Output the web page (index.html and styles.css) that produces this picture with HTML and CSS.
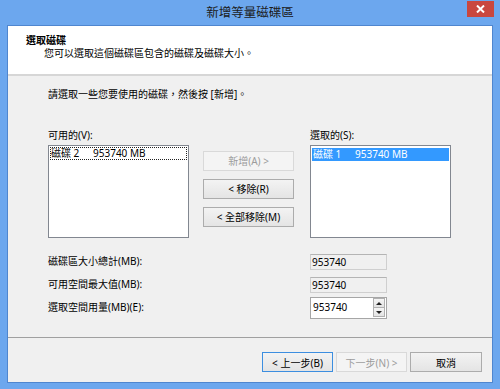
FILE: index.html
```
<!DOCTYPE html>
<html lang="zh-Hant">
<head>
  <meta charset="UTF-8" />
  <title>新增等量磁碟區</title>
  <link rel="stylesheet" href="styles.css">
</head>
<body>
  <div class="window">
    <!-- Title bar -->
    <div class="titlebar">
      <span class="title">新增等量磁碟區</span>
      <button class="close" aria-label="關閉">
        <svg width="9" height="8" viewBox="0 0 9 8"><path d="M1 0.5 L8 7.5 M8 0.5 L1 7.5" stroke="#fff" stroke-width="2"/></svg>
      </button>
    </div>

    <div class="client">
      <!-- Wizard header -->
      <div class="header">
        <div class="h-title">選取磁碟</div>
        <div class="h-sub">您可以選取這個磁碟區包含的磁碟及磁碟大小。</div>
      </div>

      <div class="content">
        <p class="intro">請選取一些您要使用的磁碟，然後按 [新增]。</p>

        <div class="pickers">
          <div class="pick-col">
            <div class="lbl">可用的(V):</div>
            <div class="listbox">
              <div class="item focus"><span class="disk">磁碟 2</span>953740 MB</div>
            </div>
          </div>
          <div class="btn-col">
            <button class="btn" disabled>新增(A) &gt;</button>
            <button class="btn">&lt; 移除(R)</button>
            <button class="btn">&lt; 全部移除(M)</button>
          </div>
          <div class="pick-col">
            <div class="lbl">選取的(S):</div>
            <div class="listbox">
              <div class="item selected"><span class="disk">磁碟 1</span>953740 MB</div>
            </div>
          </div>
        </div>

        <div class="fields">
          <div class="f-lbl">磁碟區大小總計(MB):</div>
          <div class="readonly">953740</div>
          <div class="f-lbl">可用空間最大值(MB):</div>
          <div class="readonly">953740</div>
          <div class="f-lbl">選取空間用量(MB)(E):</div>
          <div class="spin">
            <span class="spin-val">953740</span>
            <span class="spin-btns">
              <span class="spin-btn"><i class="arr up"></i></span>
              <span class="spin-btn"><i class="arr down"></i></span>
            </span>
          </div>
        </div>
      </div>

      <!-- Wizard buttons -->
      <div class="footer">
        <button class="btn nav focused">&lt; 上一步(B)</button>
        <button class="btn nav" disabled>下一步(N) &gt;</button>
        <button class="btn nav cancel">取消</button>
      </div>
    </div>
  </div>
</body>
</html>
```

FILE: styles.css
```
/* RESET & BASE */
* {
  margin: 0;
  padding: 0;
  box-sizing: border-box;
}
body {
  font-family: "Noto Sans", "Noto Sans CJK TC", sans-serif;
  font-size: 10px;
  color: #000;
  background: #fff;
}
/* WINDOW FRAME */
.window {
  width: 500px;
  height: 389px;
  background: #6ca7ee;
  padding: 0 7px 6px;
  display: flex;
  flex-direction: column;
}
.titlebar {
  position: relative;
  height: 25px;
  line-height: 25px;
  text-align: center;
}
.title {
  font-size: 12.5px;
  color: #1b1b1b;
}
.close {
  position: absolute;
  top: 1px;
  right: -1px;
  width: 27px;
  height: 16px;
  border: none;
  background: #c9473f;
  display: flex;
  align-items: center;
  justify-content: center;
}
.client {
  flex: 1;
  display: flex;
  flex-direction: column;
  background: #f0f0f0;
  border: 1px solid #4f86cf;
}
/* HEADER */
.header {
  height: 50px;
  background: #fff;
  border-bottom: 2px solid #d6d6d6;
  padding: 8px 0 0 18px;
  line-height: 13px;
}
.h-title {
  font-weight: bold;
}
.h-sub {
  padding-left: 18px;
}
/* CONTENT */
.content {
  flex: 1;
  padding: 12px 0 0 40px;
  line-height: 13px;
}
.intro {
  height: 13px;
}
.pickers {
  display: flex;
  margin-top: 28px;
}
.pick-col {
  width: 141px;
}
.lbl {
  height: 13px;
  margin-bottom: 3px;
}
.listbox {
  height: 93px;
  background: #fff;
  border: 1px solid #828790;
  padding: 1px;
}
.item {
  height: 13px;
  padding-left: 1px;
  white-space: nowrap;
}
.item.focus {
  outline: 1px dotted #222;
  outline-offset: -1px;
}
.item.selected {
  background: #3399ff;
  color: #fff;
  margin-top: 1px;
}
.disk {
  display: inline-block;
  width: 42px;
}
.btn-col {
  width: 91px;
  margin: 0 16px 0 14px;
  padding-top: 22px;
  display: flex;
  flex-direction: column;
  gap: 8px;
}
/* BUTTONS */
.btn {
  height: 20px;
  font: inherit;
  font-size: 10px;
  color: #000;
  background: linear-gradient(#f3f3f3, #e4e4e4);
  border: 1px solid #acacac;
}
.btn:disabled {
  color: #9c9c9c;
  background: #f4f4f4;
  border-color: #d9d9d9;
}
/* SIZE FIELDS */
.fields {
  display: grid;
  grid-template-columns: 262px 77px;
  grid-auto-rows: 23px;
  align-items: center;
  margin-top: 12px;
}
.readonly {
  height: 16px;
  line-height: 14px;
  padding-left: 1px;
  background: #f0f0f0;
  border: 1px solid #cfcfcf;
  border-top-color: #b4b4b4;
}
.spin {
  height: 22px;
  display: flex;
  align-items: center;
  justify-content: space-between;
  background: #fff;
  border: 1px solid #a6a6a6;
  padding: 0 1px 0 2px;
}
.spin-btns {
  display: flex;
  flex-direction: column;
}
.spin-btn {
  width: 12px;
  height: 10px;
  display: flex;
  align-items: center;
  justify-content: center;
  background: linear-gradient(#f5f5f5, #e3e3e3);
  border: 1px solid #b0b0b0;
}
.spin-btn + .spin-btn {
  margin-top: -1px;
}
.arr {
  width: 0;
  height: 0;
  border-left: 3px solid transparent;
  border-right: 3px solid transparent;
}
.arr.up {
  border-bottom: 3px solid #222;
}
.arr.down {
  border-top: 3px solid #222;
}
/* FOOTER */
.footer {
  height: 45px;
  border-top: 1px solid #a0a0a0;
  display: flex;
  justify-content: flex-end;
  align-items: flex-start;
  padding: 14px 10px 0 0;
}
.btn.nav {
  width: 71px;
}
.btn.nav + .btn.nav {
  margin-left: 3px;
}
.btn.nav.cancel {
  width: 72px;
  margin-left: 12px;
}
.btn.focused {
  border-color: #3c8ee0;
}
```
